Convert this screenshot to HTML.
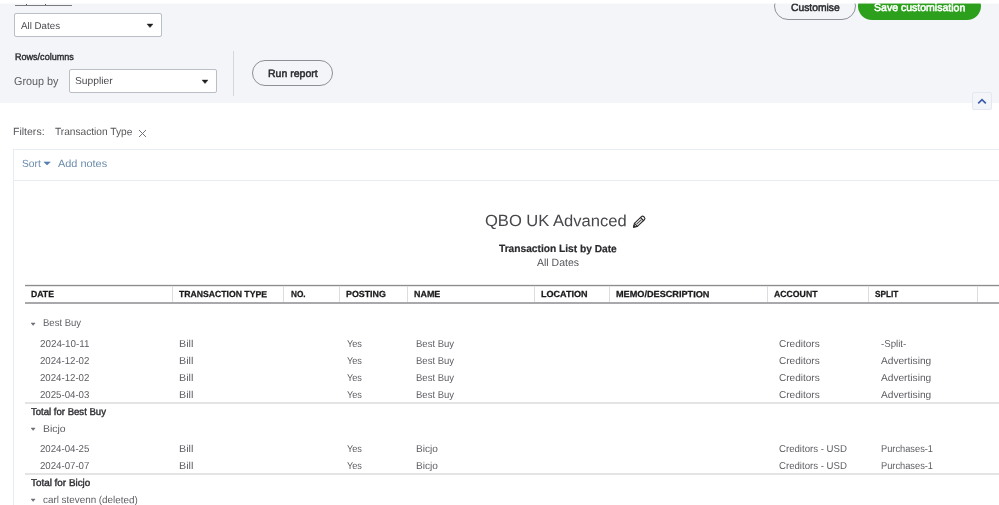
<!DOCTYPE html>
<html><head><meta charset="utf-8">
<style>
*{box-sizing:border-box;margin:0;padding:0}
html,body{width:999px;height:505px;overflow:hidden;background:#fff}
body{will-change:transform;font-family:"Liberation Sans",sans-serif;color:#393a3d;position:relative}
.abs{position:absolute;white-space:nowrap;transform-origin:0 50%}
.panel{left:0;top:3px;width:999px;height:100px;background:#f4f5f8}
.sel{background:#fff;border:1px solid #babec5;border-radius:2px;height:24px;font-size:11.5px;line-height:23px;padding-left:6px;color:#393a3d}
.caret{width:0;height:0;border-left:2.8px solid transparent;border-right:2.8px solid transparent;border-top:3.6px solid #222}
.btn{border-radius:14px;font-size:12px;text-align:center}
.t{font-size:11px;line-height:14px;color:#6b6c72}
.h{font-size:9.5px;font-weight:bold;color:#111;line-height:12px;letter-spacing:0}
.b{font-weight:bold;color:#393a3d}
.vl{width:1px;background:#dddddf;top:286px;height:16px}
.hl{height:2px;background:#e4e4e5;left:25px;width:974px;margin-top:-1px}
</style></head><body>
<div class="abs panel"></div>
<div class="abs" style="left:15px;top:5px;width:57px;height:1px;background:#7b7b7f"></div>
<div class="abs" style="left:26px;top:4px;width:1px;height:1px;background:#555"></div>
<div class="abs" style="left:45px;top:4px;width:1px;height:1px;background:#555"></div>
<div class="abs sel" style="left:14px;top:13px;width:148px"></div>
<svg class="abs" style="left:145.6px;top:22.7px" width="8" height="6" viewBox="0 0 8 6"><path d="M1 1 L7 1 L4 4.6Z" fill="#1e1e20" stroke="#1e1e20" stroke-width="0.4" stroke-linejoin="round"/></svg>
<div class="abs sel" style="left:69px;top:69px;width:148px"></div>
<svg class="abs" style="left:200.6px;top:78.7px" width="8" height="6" viewBox="0 0 8 6"><path d="M1 1 L7 1 L4 4.6Z" fill="#1e1e20" stroke="#1e1e20" stroke-width="0.4" stroke-linejoin="round"/></svg>
<div class="abs" style="left:233px;top:51px;width:1px;height:45px;background:#d4d7dc"></div>
<div class="abs btn" style="left:252px;top:60px;width:81px;height:26px;border:1px solid #8d9096;background:#f4f5f8"></div>
<div class="abs btn" style="left:774px;top:-8px;width:82px;height:28px;border:1px solid #8d9096;background:#f4f5f8"></div>
<div class="abs btn" style="left:858px;top:-8px;width:123px;height:28px;background:#2ca01c"></div>
<div class="abs" style="left:972px;top:92px;width:20px;height:18px;background:#f4f5f8;border:1px solid #e3e8f2;border-radius:2px"></div>
<svg class="abs" style="left:977px;top:97.7px" width="10" height="7" viewBox="0 0 10 7"><path d="M1.2 5.4 L5 1.7 L8.8 5.4" fill="none" stroke="#3c5cab" stroke-width="1.7"/></svg>
<svg class="abs" style="left:138px;top:129px" width="9" height="9" viewBox="0 0 9 9"><path d="M1 1 L8 8 M8 1 L1 8" stroke="#74757a" stroke-width="1" fill="none"/></svg>
<div class="abs" style="left:13px;top:149px;width:990px;height:400px;border:1px solid #e8edf4"></div>
<div class="abs" style="left:13px;top:180px;width:990px;height:1px;background:#e8edf4"></div>
<svg class="abs" style="left:41.5px;top:160.4px" width="10" height="7" viewBox="0 0 10 7"><path d="M1.9 1.9 L8.3 1.9 L5.1 5.1Z" fill="#557fae" stroke="#557fae" stroke-width="0.5" stroke-linejoin="round"/></svg>
<svg class="abs" style="left:628px;top:211px" width="22" height="22" viewBox="0 0 22 22"><g transform="translate(5.3,16.3) rotate(-43.5)" fill="none" stroke="#2e2e30" stroke-width="1.15" stroke-linejoin="round" stroke-linecap="round"><path d="M0.3 0 L3.6 -2.1 L13.2 -2.1 Q14.9 -2.1 14.9 -0.4 L14.9 0.4 Q14.9 2.1 13.2 2.1 L3.6 2.1 Z" fill="#fff"/><path d="M3.6 -2.1 L3.6 2.1 M12 -2.1 L12 2.1"/><path d="M5 0 L10.8 0" stroke="#555" stroke-width="1.3"/><path d="M0.3 0 L1.8 -0.9 L1.8 0.9Z" fill="#2e2e30"/></g></svg>
<div class="abs" style="left:25px;top:285px;width:974px;height:1px;background:#8e8e90"></div><div class="abs" style="left:25px;top:284px;width:974px;height:1px;background:#ececec"></div><div class="abs" style="left:25px;top:286px;width:974px;height:1px;background:#e6e6e6"></div>
<div class="abs" style="left:25px;top:302px;width:974px;height:2px;background:#a9a9ab"></div>
<div class="abs vl" style="left:172px"></div>
<div class="abs vl" style="left:283px"></div>
<div class="abs vl" style="left:339px"></div>
<div class="abs vl" style="left:407px"></div>
<div class="abs vl" style="left:534px"></div>
<div class="abs vl" style="left:609px"></div>
<div class="abs vl" style="left:767px"></div>
<div class="abs vl" style="left:868px"></div>
<div class="abs vl" style="left:977px"></div>
<svg class="abs" style="left:30.3px;top:321.7px" width="7" height="5" viewBox="0 0 7 5"><path d="M1.1 1 L5.1 1 L3.1 3.4Z" fill="#6b6c72" stroke="#6b6c72" stroke-width="0.5" stroke-linejoin="round"/></svg>
<div class="abs hl" style="top:403px"></div>
<svg class="abs" style="left:30.3px;top:426.9px" width="7" height="5" viewBox="0 0 7 5"><path d="M1.1 1 L5.1 1 L3.1 3.4Z" fill="#6b6c72" stroke="#6b6c72" stroke-width="0.5" stroke-linejoin="round"/></svg>
<div class="abs hl" style="top:474px"></div>
<svg class="abs" style="left:30.3px;top:498.4px" width="7" height="5" viewBox="0 0 7 5"><path d="M1.1 1 L5.1 1 L3.1 3.4Z" fill="#6b6c72" stroke="#6b6c72" stroke-width="0.5" stroke-linejoin="round"/></svg>
<div class="abs" style="left:21.05px;top:18.90px;font-size:9.8px;line-height:13px;font-weight:normal;color:#4a4b50;transform:rotate(0.1deg) scaleX(0.9956);">All Dates</div>
<div class="abs" style="left:15.0px;top:50.90px;font-size:9.6px;line-height:12px;font-weight:normal;color:#2a2b2e;transform:rotate(0.1deg) scaleX(0.9421);-webkit-text-stroke:0.4px #2a2b2e;">Rows/columns</div>
<div class="abs" style="left:14.05px;top:73.50px;font-size:11.5px;line-height:15px;font-weight:normal;color:#5d5e64;transform:rotate(0.1deg) scaleX(0.9399);">Group by</div>
<div class="abs" style="left:75.1px;top:74.00px;font-size:10px;line-height:13px;font-weight:normal;color:#4a4b50;transform:rotate(0.1deg) scaleX(1.0285);">Supplier</div>
<div class="abs" style="left:268.16px;top:65.70px;font-size:10.6px;line-height:14px;font-weight:normal;color:#2a2b2e;transform:rotate(0.1deg) scaleX(0.9930);-webkit-text-stroke:0.5px #2a2b2e;">Run report</div>
<div class="abs" style="left:791.0px;top:0.00px;font-size:10.6px;line-height:14px;font-weight:normal;color:#2a2b2e;transform:rotate(0.1deg) scaleX(0.9731);-webkit-text-stroke:0.5px #2a2b2e;">Customise</div>
<div class="abs" style="left:873.8400000000001px;top:0.00px;font-size:10.6px;line-height:14px;font-weight:normal;color:#fff;transform:rotate(0.1deg) scaleX(0.9942);-webkit-text-stroke:0.55px #fff;">Save customisation</div>
<div class="abs" style="left:13.310000000000002px;top:124.65px;font-size:10.4px;line-height:14px;font-weight:normal;color:#55565a;transform:rotate(0.1deg) scaleX(1.0126);">Filters:</div>
<div class="abs" style="left:54.84000000000001px;top:124.65px;font-size:10.4px;line-height:14px;font-weight:normal;color:#55565a;transform:rotate(0.1deg) scaleX(0.9772);">Transaction Type</div>
<div class="abs" style="left:21.520000000000007px;top:156.50px;font-size:10.4px;line-height:14px;font-weight:normal;color:#6b8bab;transform:rotate(0.1deg) scaleX(0.9851);">Sort</div>
<div class="abs" style="left:58.42px;top:156.50px;font-size:10.4px;line-height:14px;font-weight:normal;color:#6b8bab;transform:rotate(0.1deg) scaleX(1.0490);">Add notes</div>
<div class="abs" style="left:484.93999999999994px;top:209.50px;font-size:16.2px;line-height:21px;font-weight:normal;color:#46474b;transform:rotate(0.1deg) scaleX(1.0224);">QBO UK Advanced</div>
<div class="abs" style="left:499.0px;top:241.00px;font-size:10.5px;line-height:14px;font-weight:bold;color:#2a2b2e;transform:rotate(0.1deg) scaleX(0.9702);-webkit-text-stroke:0.2px #2a2b2e;">Transaction List by Date</div>
<div class="abs" style="left:537.0px;top:255.00px;font-size:10.5px;line-height:14px;font-weight:normal;color:#55565b;transform:rotate(0.1deg) scaleX(1.0000);">All Dates</div>
<div class="abs" style="left:31.420000000000005px;top:288.25px;font-size:8.9px;line-height:12px;font-weight:bold;color:#1a1a1c;transform:rotate(0.1deg) scaleX(0.9767);-webkit-text-stroke:0.25px #151517;">DATE</div>
<div class="abs" style="left:179.42px;top:288.25px;font-size:8.9px;line-height:12px;font-weight:bold;color:#1a1a1c;transform:rotate(0.1deg) scaleX(0.9750);-webkit-text-stroke:0.25px #151517;">TRANSACTION TYPE</div>
<div class="abs" style="left:290.84000000000015px;top:288.25px;font-size:8.9px;line-height:12px;font-weight:bold;color:#1a1a1c;transform:rotate(0.1deg) scaleX(0.9297);-webkit-text-stroke:0.25px #151517;">NO.</div>
<div class="abs" style="left:346.37000000000006px;top:288.25px;font-size:8.9px;line-height:12px;font-weight:bold;color:#1a1a1c;transform:rotate(0.1deg) scaleX(0.9979);-webkit-text-stroke:0.25px #151517;">POSTING</div>
<div class="abs" style="left:414.4200000000001px;top:288.25px;font-size:8.9px;line-height:12px;font-weight:bold;color:#1a1a1c;transform:rotate(0.1deg) scaleX(1.0073);-webkit-text-stroke:0.25px #151517;">NAME</div>
<div class="abs" style="left:541.4200000000001px;top:288.25px;font-size:8.9px;line-height:12px;font-weight:bold;color:#1a1a1c;transform:rotate(0.1deg) scaleX(1.0200);-webkit-text-stroke:0.25px #151517;">LOCATION</div>
<div class="abs" style="left:616.4200000000001px;top:288.25px;font-size:8.9px;line-height:12px;font-weight:bold;color:#1a1a1c;transform:rotate(0.1deg) scaleX(1.0300);-webkit-text-stroke:0.25px #151517;">MEMO/DESCRIPTION</div>
<div class="abs" style="left:774.4200000000001px;top:288.25px;font-size:8.9px;line-height:12px;font-weight:bold;color:#1a1a1c;transform:rotate(0.1deg) scaleX(0.9800);-webkit-text-stroke:0.25px #151517;">ACCOUNT</div>
<div class="abs" style="left:875.2100000000003px;top:288.25px;font-size:8.9px;line-height:12px;font-weight:bold;color:#1a1a1c;transform:rotate(0.1deg) scaleX(0.9280);-webkit-text-stroke:0.25px #151517;">SPLIT</div>
<div class="abs" style="left:42.52px;top:316.30px;font-size:10px;line-height:13px;font-weight:normal;color:#5c5d62;transform:rotate(0.1deg) scaleX(0.9517);">Best Buy</div>
<div class="abs" style="left:39.84000000000001px;top:336.50px;font-size:10px;line-height:13px;font-weight:normal;color:#5c5d62;transform:rotate(0.1deg) scaleX(0.9820);">2024-10-11</div>
<div class="abs" style="left:178.73000000000002px;top:336.50px;font-size:10px;line-height:13px;font-weight:normal;color:#5c5d62;transform:rotate(0.1deg) scaleX(1.0750);">Bill</div>
<div class="abs" style="left:346.78999999999996px;top:336.50px;font-size:10px;line-height:13px;font-weight:normal;color:#5c5d62;transform:rotate(0.1deg) scaleX(0.9167);">Yes</div>
<div class="abs" style="left:415.6799999999999px;top:336.50px;font-size:10px;line-height:13px;font-weight:normal;color:#5c5d62;transform:rotate(0.1deg) scaleX(0.9517);">Best Buy</div>
<div class="abs" style="left:778.7899999999997px;top:336.50px;font-size:10px;line-height:13px;font-weight:normal;color:#5c5d62;transform:rotate(0.1deg) scaleX(1.0024);">Creditors</div>
<div class="abs" style="left:881.1599999999999px;top:336.50px;font-size:10px;line-height:13px;font-weight:normal;color:#5c5d62;transform:rotate(0.1deg) scaleX(0.9654);">-Split-</div>
<div class="abs" style="left:39.84000000000001px;top:353.50px;font-size:10px;line-height:13px;font-weight:normal;color:#5c5d62;transform:rotate(0.1deg) scaleX(0.9647);">2024-12-02</div>
<div class="abs" style="left:178.73000000000002px;top:353.50px;font-size:10px;line-height:13px;font-weight:normal;color:#5c5d62;transform:rotate(0.1deg) scaleX(1.0750);">Bill</div>
<div class="abs" style="left:346.78999999999996px;top:353.50px;font-size:10px;line-height:13px;font-weight:normal;color:#5c5d62;transform:rotate(0.1deg) scaleX(0.9167);">Yes</div>
<div class="abs" style="left:415.6799999999999px;top:353.50px;font-size:10px;line-height:13px;font-weight:normal;color:#5c5d62;transform:rotate(0.1deg) scaleX(0.9517);">Best Buy</div>
<div class="abs" style="left:778.7899999999997px;top:353.50px;font-size:10px;line-height:13px;font-weight:normal;color:#5c5d62;transform:rotate(0.1deg) scaleX(1.0024);">Creditors</div>
<div class="abs" style="left:881.1599999999999px;top:353.50px;font-size:10px;line-height:13px;font-weight:normal;color:#5c5d62;transform:rotate(0.1deg) scaleX(1.0148);">Advertising</div>
<div class="abs" style="left:39.84000000000001px;top:370.50px;font-size:10px;line-height:13px;font-weight:normal;color:#5c5d62;transform:rotate(0.1deg) scaleX(0.9647);">2024-12-02</div>
<div class="abs" style="left:178.73000000000002px;top:370.50px;font-size:10px;line-height:13px;font-weight:normal;color:#5c5d62;transform:rotate(0.1deg) scaleX(1.0750);">Bill</div>
<div class="abs" style="left:346.78999999999996px;top:370.50px;font-size:10px;line-height:13px;font-weight:normal;color:#5c5d62;transform:rotate(0.1deg) scaleX(0.9167);">Yes</div>
<div class="abs" style="left:415.6799999999999px;top:370.50px;font-size:10px;line-height:13px;font-weight:normal;color:#5c5d62;transform:rotate(0.1deg) scaleX(0.9517);">Best Buy</div>
<div class="abs" style="left:778.7899999999997px;top:370.50px;font-size:10px;line-height:13px;font-weight:normal;color:#5c5d62;transform:rotate(0.1deg) scaleX(1.0024);">Creditors</div>
<div class="abs" style="left:881.1599999999999px;top:370.50px;font-size:10px;line-height:13px;font-weight:normal;color:#5c5d62;transform:rotate(0.1deg) scaleX(1.0148);">Advertising</div>
<div class="abs" style="left:39.84000000000001px;top:387.50px;font-size:10px;line-height:13px;font-weight:normal;color:#5c5d62;transform:rotate(0.1deg) scaleX(0.9647);">2025-04-03</div>
<div class="abs" style="left:178.73000000000002px;top:387.50px;font-size:10px;line-height:13px;font-weight:normal;color:#5c5d62;transform:rotate(0.1deg) scaleX(1.0750);">Bill</div>
<div class="abs" style="left:346.78999999999996px;top:387.50px;font-size:10px;line-height:13px;font-weight:normal;color:#5c5d62;transform:rotate(0.1deg) scaleX(0.9167);">Yes</div>
<div class="abs" style="left:415.6799999999999px;top:387.50px;font-size:10px;line-height:13px;font-weight:normal;color:#5c5d62;transform:rotate(0.1deg) scaleX(0.9517);">Best Buy</div>
<div class="abs" style="left:778.7899999999997px;top:387.50px;font-size:10px;line-height:13px;font-weight:normal;color:#5c5d62;transform:rotate(0.1deg) scaleX(1.0024);">Creditors</div>
<div class="abs" style="left:881.1599999999999px;top:387.50px;font-size:10px;line-height:13px;font-weight:normal;color:#5c5d62;transform:rotate(0.1deg) scaleX(1.0148);">Advertising</div>
<div class="abs" style="left:31.0px;top:404.80px;font-size:10px;line-height:13px;font-weight:normal;color:#2e2f33;transform:rotate(0.1deg) scaleX(0.9563);-webkit-text-stroke:0.4px #2e2f33;">Total for Best Buy</div>
<div class="abs" style="left:42.52px;top:421.50px;font-size:10px;line-height:13px;font-weight:normal;color:#5c5d62;transform:rotate(0.1deg) scaleX(1.0450);">Bicjo</div>
<div class="abs" style="left:39.84000000000001px;top:442.10px;font-size:10px;line-height:13px;font-weight:normal;color:#5c5d62;transform:rotate(0.1deg) scaleX(0.9647);">2024-04-25</div>
<div class="abs" style="left:178.73000000000002px;top:442.10px;font-size:10px;line-height:13px;font-weight:normal;color:#5c5d62;transform:rotate(0.1deg) scaleX(1.0750);">Bill</div>
<div class="abs" style="left:346.78999999999996px;top:442.10px;font-size:10px;line-height:13px;font-weight:normal;color:#5c5d62;transform:rotate(0.1deg) scaleX(0.9167);">Yes</div>
<div class="abs" style="left:415.6799999999999px;top:442.10px;font-size:10px;line-height:13px;font-weight:normal;color:#5c5d62;transform:rotate(0.1deg) scaleX(1.0097);">Bicjo</div>
<div class="abs" style="left:778.7899999999997px;top:442.10px;font-size:10px;line-height:13px;font-weight:normal;color:#5c5d62;transform:rotate(0.1deg) scaleX(0.9627);">Creditors - USD</div>
<div class="abs" style="left:881.4699999999997px;top:442.10px;font-size:10px;line-height:13px;font-weight:normal;color:#5c5d62;transform:rotate(0.1deg) scaleX(0.9265);">Purchases-1</div>
<div class="abs" style="left:39.84000000000001px;top:459.10px;font-size:10px;line-height:13px;font-weight:normal;color:#5c5d62;transform:rotate(0.1deg) scaleX(0.9647);">2024-07-07</div>
<div class="abs" style="left:178.73000000000002px;top:459.10px;font-size:10px;line-height:13px;font-weight:normal;color:#5c5d62;transform:rotate(0.1deg) scaleX(1.0750);">Bill</div>
<div class="abs" style="left:346.78999999999996px;top:459.10px;font-size:10px;line-height:13px;font-weight:normal;color:#5c5d62;transform:rotate(0.1deg) scaleX(0.9167);">Yes</div>
<div class="abs" style="left:415.6799999999999px;top:459.10px;font-size:10px;line-height:13px;font-weight:normal;color:#5c5d62;transform:rotate(0.1deg) scaleX(1.0097);">Bicjo</div>
<div class="abs" style="left:778.7899999999997px;top:459.10px;font-size:10px;line-height:13px;font-weight:normal;color:#5c5d62;transform:rotate(0.1deg) scaleX(0.9627);">Creditors - USD</div>
<div class="abs" style="left:881.4699999999997px;top:459.10px;font-size:10px;line-height:13px;font-weight:normal;color:#5c5d62;transform:rotate(0.1deg) scaleX(0.9265);">Purchases-1</div>
<div class="abs" style="left:31.0px;top:476.00px;font-size:10px;line-height:13px;font-weight:normal;color:#2e2f33;transform:rotate(0.1deg) scaleX(0.9881);-webkit-text-stroke:0.4px #2e2f33;">Total for Bicjo</div>
<div class="abs" style="left:43.42px;top:493.00px;font-size:10px;line-height:13px;font-weight:normal;color:#5c5d62;transform:rotate(0.1deg) scaleX(0.9851);">carl stevenn (deleted)</div>
<div class="abs" style="left:0;top:0;width:999px;height:3px;background:#fff"></div><div class="abs" style="left:0;top:3px;width:999px;height:1px;background:rgba(255,255,255,0.55)"></div>
</body></html>
